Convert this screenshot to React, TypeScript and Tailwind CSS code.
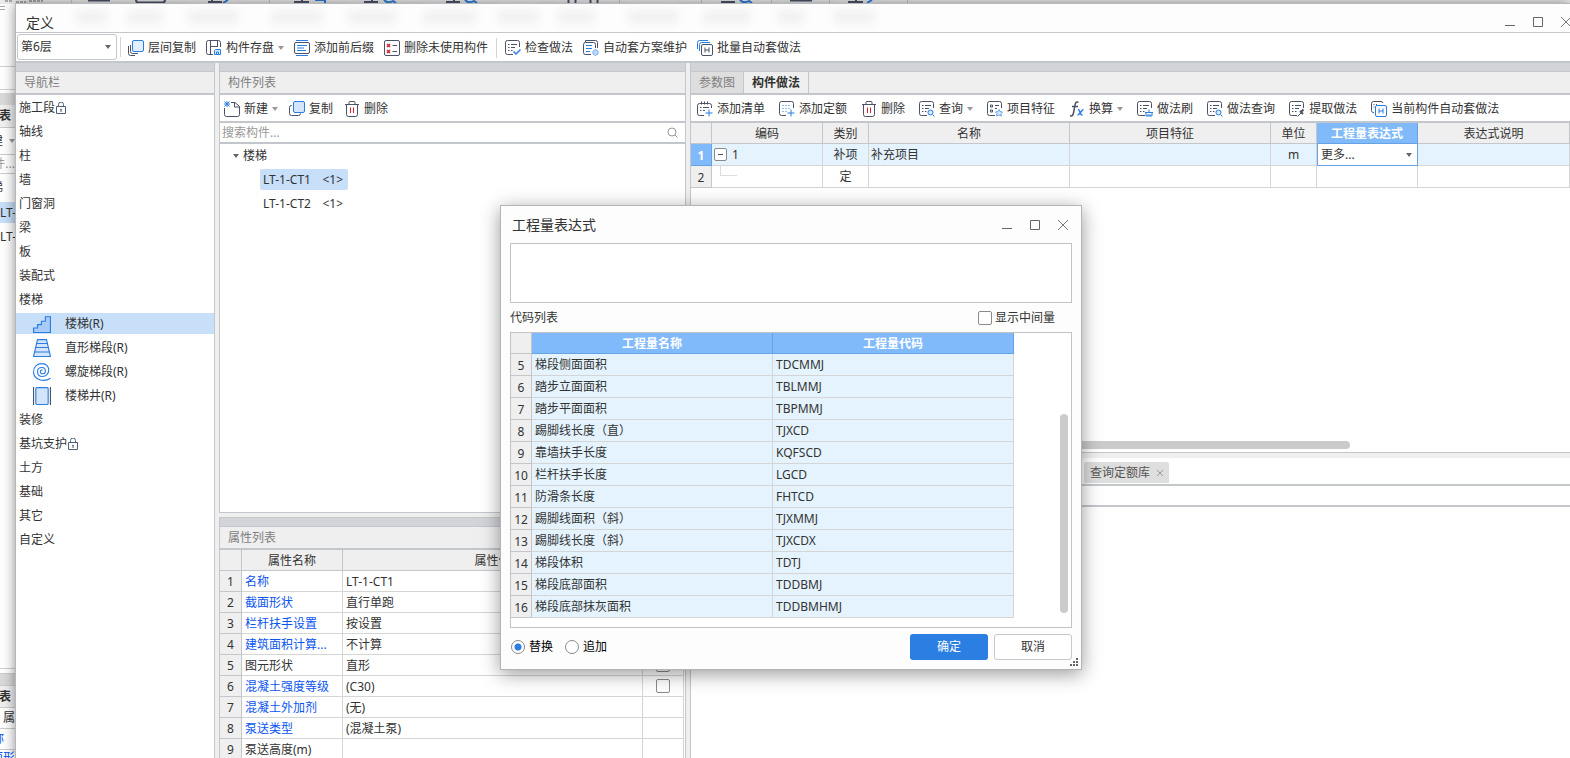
import { useState } from "react";
import type { ReactNode } from "react";

const INK = "#4b5166";
const BLUE = "#2a7de1";

function Svg({ children, size = 16 }: { children: ReactNode; size?: number }) {
  return (
    <svg width={size} height={size} viewBox="0 0 16 16" fill="none" stroke={INK} className="shrink-0" aria-hidden="true">
      {children}
    </svg>
  );
}

/* sheet with the lower right corner left open for a badge */
const Sheet = () => (
  <>
    <path d="M8 14.5H2.5a2 2 0 0 1-2-2v-10a2 2 0 0 1 2-2h10a2 2 0 0 1 2 2V7" />
    <path d="M3 4.5h1.5M6 4.5h6M3 7.5h1.5M6 7.5h4M3 10.5h1.5M6 10.5h1.5" />
  </>
);

const icons: Record<string, ReactNode> = {
  layerCopy: (
    <>
      <path d="M.5 6v7.5a2 2 0 0 0 2 2H7M2.5 5v6.500a2 2 0 0 0 2 2H10" />
      <rect x="4.5" y=".5" width="11" height="11" rx="1.5" fill="#e3efff" stroke={BLUE} />
    </>
  ),
  save: (
    <>
      <path d="M7 14.5H2.5a2 2 0 0 1-2-2v-10a2 2 0 0 1 2-2h10a2 2 0 0 1 2 2V7" />
      <path d="M4.5 1v13M4.5 6.5h7M11.5 1v6" />
      <path d="M9.5 9.5h5v5h-6v-4z" stroke={BLUE} fill="#d7e7fd" />
      <path d="M10.5 14v-2h2v2" stroke={BLUE} />
    </>
  ),
  affix: (
    <>
      <path d="M2 .5h12M2 15.5h12" stroke={BLUE} />
      <rect x=".5" y="2.5" width="15" height="11" rx="1.5" />
      <path d="M3 5.5h10M3 8h7M3 10.5h9" stroke={BLUE} />
    </>
  ),
  unused: (
    <>
      <rect x=".5" y=".5" width="15" height="15" rx="1.5" />
      <path d="m3 4 3 3m0-3L3 7m0 3 3 3m0-3-3 3" stroke="#d81e28" strokeWidth="1.5" />
      <path d="M8.500 5.500H13M8.500 11.500H13" />
    </>
  ),
  check: (
    <>
      <Sheet />
      <path d="m8.500 11.500 2.500 2.500 4.500-4.500" stroke={BLUE} strokeWidth="1.5" />
    </>
  ),
  plan: (
    <>
      <path d="M2.500 2V.5h10a2 2 0 0 1 2 2V8" />
      <path d="M8 14.500H2.500a2 2 0 0 1-2-2v-8a2 2 0 0 1 2-2h8a2 2 0 0 1 2 2V8" />
      <path d="M3 5.500h6M3 8.500h6M3 11.500h4" stroke={BLUE} />
      <path d="m12.500 9.500 2.500 1.500v3l-2.500 1.500L10 14v-3z" stroke="#79b0f5" fill="#bcd8fb" />
    </>
  ),
  batch: (
    <>
      <path d="M.5 9V2.500a2 2 0 0 1 2-2H11M2.500 11V4.500a2 2 0 0 1 2-2H13" stroke={BLUE} />
      <rect x="4.5" y="4.5" width="11" height="11" rx="1.5" />
      <path d="M8 7.500v5M12 7.500v5M8 10h4" />
    </>
  ),
  current: (
    <>
      <path d="M3 11.500a2 2 0 0 1-2.500-2v-7a2 2 0 0 1 2-2H10a2 2 0 0 1 2 1.500" />
      <path d="M2.500 3.500h1M5 3.500h1M2.500 6h1" />
      <rect x="4.5" y="4.5" width="11" height="11" rx="1.5" stroke={BLUE} />
      <path d="M8 7.500v5M12 7.500v5M8 10h4" stroke={BLUE} />
    </>
  ),
  create: (
    <>
      <path d="M7 1.500h4l4.500 4v8a2 2 0 0 1-2 2h-11a2 2 0 0 1-2-2V7M10.500 1.500V6h5" />
      <path d="m.5.5 5 5m0-5-5 5m2.500-5 2.500 2.500M.5 3 3 5.500M.5 3 3 .5m2.500 2.500L3 5.500" stroke={BLUE} />
    </>
  ),
  copy: (
    <>
      <path d="M3 4.500h-.5a2 2 0 0 0-2 2v6a2 2 0 0 0 2 2h7a2 2 0 0 0 2-2" />
      <rect x="4.5" y=".5" width="11" height="11" rx="1.5" fill="#d3e4fb" stroke={BLUE} />
    </>
  ),
  trash: (
    <>
      <path d="M1 3.500h14M5 3V1.500a1 1 0 0 1 1-1h4a1 1 0 0 1 1 1V3M2.500 3.500v10a2 2 0 0 0 2 2h7a2 2 0 0 0 2-2v-10" />
      <path d="M6.500 6.500v5.500M9.500 6.500v5.500" stroke="#d81e28" />
    </>
  ),
  addList: (
    <>
      <path d="M7 14.500H2.500a2 2 0 0 1-2-2v-8a2 2 0 0 1 2-2h10a2 2 0 0 1 2 2V7M4.500.5v3M7.500.5v3M10.500.5v3" />
      <path d="M3 6.500h1.500M6 6.500h6M3 9.500h1.500M6 9.500h2" />
      <path d="M12 8.500v7M8.500 12h7" stroke={BLUE} />
    </>
  ),
  addQuota: (
    <>
      <path d="M7 14.500H2.500a2 2 0 0 1-2-2v-10a2 2 0 0 1 2-2h10a2 2 0 0 1 2 2V7" />
      <path d="M3.500 4.500h8M3.500 7.500h8M3.500 10.500h4" stroke={BLUE} strokeDasharray="1 2" />
      <path d="M12 8.500v7M8.500 12h7" stroke={BLUE} />
    </>
  ),
  query: (
    <>
      <Sheet />
      <circle cx="11.5" cy="11.5" r="2.5" stroke={BLUE} fill="#d7e7fd" />
      <path d="m13.500 13.500 2 2" stroke={BLUE} />
    </>
  ),
  feature: (
    <>
      <path d="M8 14.500H2.500a2 2 0 0 1-2-2v-10a2 2 0 0 1 2-2h10a2 2 0 0 1 2 2V7" />
      <path d="M3.500 4h2v2h-2zM3.500 9h2v2h-2zM8 4.500h4M8 7.500h2" />
      <path d="m12 8.500 1 2 2.500.5-1.500 1.500.5 2.500-2.500-1-2.500 1 .5-2.500L8.500 11l2.500-.5z" stroke="#66a4f2" fill="#dbe9fd" />
    </>
  ),
  brush: (
    <>
      <Sheet />
      <path d="M9 11.500h6v3.500H9zM12 11V8.500M8 11.500h8M11 13v2M13 13v2" stroke={BLUE} />
    </>
  ),
  extract: (
    <>
      <Sheet />
      <path d="m8.500 15.500 4-4" />
      <path d="m11 10 3 3m-1.500-2.500 2-2" strokeWidth="2" />
    </>
  ),
};

function Icon({ name }: { name: string }) {
  if (name === "fx") {
    return (
      <svg width="16" height="16" viewBox="0 0 16 16" fill="none" className="shrink-0" aria-hidden="true">
        <path d="M9.500 1.500C8 .5 6.500 1 6 4L4.500 12c-.5 2.500-1.500 3.500-3.500 2.500M3 5.500h6" stroke={INK} strokeWidth="1.5" />
        <path d="M9 8.500c2-.5 2 6.500 4.500 5.500M14.500 8.500c-2 0-3.500 5.500-6 5.500" stroke={BLUE} strokeWidth="1.5" />
      </svg>
    );
  }
  return <Svg>{icons[name]}</Svg>;
}

function Caret({ dark }: { dark?: boolean }) {
  return (
    <svg width="6" height="4" viewBox="0 0 6 4" className={dark ? "shrink-0 fill-[#666]" : "shrink-0 fill-[#999]"} aria-hidden="true">
      <path d="M0 0h6L3 4z" />
    </svg>
  );
}

function ToolButton({ icon, label, menu }: { icon: string; label: string; menu?: boolean }) {
  return (
    <button type="button" className="flex shrink-0 items-center gap-1 whitespace-nowrap hover:bg-[#e5f3ff]">
      <Icon name={icon} />
      {label}
      {menu && <Caret />}
    </button>
  );
}

function PanelTitle({ children }: { children: ReactNode }) {
  return (
    <>
      <div className="h-[9px] shrink-0 border-b border-[#c3c6cb] bg-[#d3d4da]" />
      <h2 className="flex h-[23px] shrink-0 items-center border-b-2 border-[#c3c6cb] bg-[#efefef] pl-2 text-[#808080]">
        {children}
      </h2>
    </>
  );
}

function WindowButtons({ className }: { className: string }) {
  return (
    <div className={className}>
      <button type="button" aria-label="最小化" className="h-3 w-3">
        <svg width="12" height="12" viewBox="0 0 12 12" stroke="#666"><path d="M1 9.500h10" /></svg>
      </button>
      <button type="button" aria-label="最大化" className="h-3 w-3">
        <svg width="12" height="12" viewBox="0 0 12 12" fill="none" stroke="#666"><path d="M1.500 1.500h9v9h-9z" /></svg>
      </button>
      <button type="button" aria-label="关闭" className="h-3 w-3">
        <svg width="12" height="12" viewBox="0 0 12 12" stroke="#777"><path d="m1 1 10 10M11 1 1 11" /></svg>
      </button>
    </div>
  );
}

const Lock = () => (
  <svg width="10" height="12" viewBox="0 0 10 12" fill="none" stroke="#4f6076" aria-hidden="true">
    <path d="M.5 4.500h9v7h-9zM2.500 4V2.500a2 2 0 0 1 5 0V4M5 8v2" />
    <circle cx="5" cy="7.5" r=".5" />
  </svg>
);

const stairIcons = [
  <path d="M.5 15.500v-4H4v-3h3.500v-3H11v-4h4.500v14z" fill="#a9cbf7" stroke={BLUE} />,
  <path d="M4 .5h8l3.500 15H.5zM3.500 4h9M2.500 7.500h11M1.500 11.500h13" fill="#d3e4fb" stroke={BLUE} />,
  <path
    d="M15.500 13.500C10 17.500.5 15 .5 8 .5 3 4 .5 8 .5s6 3 6 6-2.500 5.500-5.500 5.500-4.500-2-4.500-4.500S5.500 4 8 4s3 1.500 3 3-1 2.500-2.500 2.500S6.500 8.500 6.500 7.500 7.500 6 8.500 6.500"
    stroke={BLUE}
  />,
  <>
    <path d="M.5 0v16M15.500 0v16" />
    <rect x="2.5" y=".5" width="11" height="15" rx="1" fill="#d3e4fb" stroke={BLUE} />
  </>,
];

type NavItem = { name: string; locked?: boolean; children?: string[] };

const nav: NavItem[] = [
  { name: "施工段", locked: true },
  { name: "轴线" },
  { name: "柱" },
  { name: "墙" },
  { name: "门窗洞" },
  { name: "梁" },
  { name: "板" },
  { name: "装配式" },
  { name: "楼梯", children: ["楼梯(R)", "直形梯段(R)", "螺旋梯段(R)", "楼梯井(R)"] },
  { name: "装修" },
  { name: "基坑支护", locked: true },
  { name: "土方" },
  { name: "基础" },
  { name: "其它" },
  { name: "自定义" },
];

const props = [
  { name: "名称", value: "LT-1-CT1", blue: true },
  { name: "截面形状", value: "直行单跑", blue: true },
  { name: "栏杆扶手设置", value: "按设置", blue: true },
  { name: "建筑面积计算...", value: "不计算", blue: true },
  { name: "图元形状", value: "直形", extra: true },
  { name: "混凝土强度等级", value: "(C30)", blue: true, extra: true },
  { name: "混凝土外加剂", value: "(无)", blue: true },
  { name: "泵送类型", value: "(混凝土泵)", blue: true },
  { name: "泵送高度(m)", value: "" },
];

const codes = [
  [5, "梯段侧面面积", "TDCMMJ"],
  [6, "踏步立面面积", "TBLMMJ"],
  [7, "踏步平面面积", "TBPMMJ"],
  [8, "踢脚线长度（直）", "TJXCD"],
  [9, "靠墙扶手长度", "KQFSCD"],
  [10, "栏杆扶手长度", "LGCD"],
  [11, "防滑条长度", "FHTCD"],
  [12, "踢脚线面积（斜）", "TJXMMJ"],
  [13, "踢脚线长度（斜）", "TJXCDX"],
  [14, "梯段体积", "TDTJ"],
  [15, "梯段底部面积", "TDDBMJ"],
  [16, "梯段底部抹灰面积", "TDDBMHMJ"],
];

const box = "h-[14px] w-[14px] shrink-0 appearance-none border border-[#8a8a8a] bg-white checked:bg-[#2a7de1]";
const cell = "border-r border-b border-[#d5d5d5] p-0";
const head = "border-r border-b border-[#c3c6cb] bg-[#efefef] p-0 pt-[2px] font-normal";
const activeHead = "border-r border-b border-[#66a3e6] bg-[#81bafa] p-0 pt-[2px] font-bold text-white";

/* main program showing behind the definition window */
function Backdrop() {
  return (
    <div className="flex h-full flex-col overflow-hidden bg-white" aria-hidden="true">
      <div className="h-1 shrink-0 bg-[#ececec]">
        <svg width="920" height="4" viewBox="0 0 920 4" fill="none">
          <path d="M71.500 0v4M269.500 0v4M619.500 0v4M701.500 0v4M771.500 0v4M829.500 0v4M907.500 0v4" stroke="#c8c8c8" />
          <path d="M5 1h8M16 2h10M29 1h14" stroke="#a8a8a8" strokeWidth="2" strokeDasharray="3 1" />
          <path d="M88 .5h22M790 .5h22M136 0q0 2.500 3 2.500h23q3 0 3-2.500" stroke={INK} strokeWidth="2" />
          <path d="M208 2h14M294 2h15M364 2h14M446 2h14M721 2h14M848 2h15M212 0v2M302 0v2M372 0v2M454 0v2M856 0v2" stroke={INK} strokeWidth="2" />
          <path d="M568.500 0v3M575.500 0v3M590.500 0v3M597.500 0v3" stroke={INK} strokeWidth="2" />
          <path d="m223 3 5-3M315 0h10v3M384 0q4 4 9 1l3 2M465 0q4 4 9 1l3 2M740 0q4 4 9 1l3 2M867 3l5-3" stroke={BLUE} strokeWidth="2" />
        </svg>
      </div>
      <div className="flex w-[15px] flex-1 flex-col overflow-hidden whitespace-nowrap">
        <div className="h-[63px] shrink-0 border-b border-[#d0d0d0] pt-[2px]">
          <svg width="6" height="8" viewBox="0 0 6 8" stroke="#aaa"><path d="M0 .5h5M0 3.500h5" /></svg>
        </div>
        <div className="h-[23px] shrink-0 border-b border-[#d0d0d0]" />
        <div className="mt-[3px] h-[12px] shrink-0 bg-[#d9d9d9]" />
        <div className="flex h-[23px] shrink-0 items-center justify-end border-b border-[#ccc] bg-[#efefef] pr-1 font-bold">表</div>
        <div className="flex h-[27px] shrink-0 items-center justify-end gap-[6px] border-b border-[#ccc]">建<Caret /></div>
        <div className="flex h-[19px] shrink-0 items-center justify-end border-b border-[#ccc] text-[#999]">件...</div>
        <div className="flex h-[28px] shrink-0 items-center justify-end pr-3">梯</div>
        <div className="flex h-[21px] shrink-0 items-center bg-[#c7dff8]">LT-</div>
        <div className="flex h-[27px] shrink-0 items-center">LT-</div>
        <div className="flex-1 border-b border-[#d0d0d0]" />
        <div className="mt-[4px] h-[13px] shrink-0 border-y border-[#ccc] bg-[#d9d9d9]" />
        <div className="flex h-[22px] shrink-0 items-center justify-end border-b border-[#ccc] bg-[#efefef] pr-1 font-bold">表</div>
        <div className="flex h-[21px] shrink-0 items-center border-b border-[#ccc] pl-[3px]">属</div>
        <div className="flex h-[21px] shrink-0 items-center justify-end border-b border-[#ccc] pr-[11px] text-[#0a55f0]">称</div>
        <div className="flex h-[8px] shrink-0 justify-end text-[#0a55f0]">面形</div>
      </div>
    </div>
  );
}

function NavPanel() {
  const [active, setActive] = useState("楼梯(R)");
  return (
    <aside className="flex w-[199px] shrink-0 flex-col border-r border-[#c3c6cb] bg-white">
      <PanelTitle>导航栏</PanelTitle>
      <ul className="pt-px">
        {nav.map((item) => (
          <li key={item.name}>
            <button type="button" className="flex h-6 w-full items-center gap-px pl-[3px]">
              {item.name}
              {item.locked && <Lock />}
            </button>
            {item.children && (
              <ul>
                {item.children.map((child, i) => (
                  <li key={child} className="h-6 pt-px">
                    <button
                      type="button"
                      onClick={() => setActive(child)}
                      className={`flex h-[21px] w-full items-center gap-[14px] pl-[17px] ${active === child ? "bg-[#c8dff9]" : ""}`}
                    >
                      <Svg size={18}>{stairIcons[i]}</Svg>
                      {child}
                    </button>
                  </li>
                ))}
              </ul>
            )}
          </li>
        ))}
      </ul>
    </aside>
  );
}

function ComponentPanel() {
  return (
    <div className="flex w-[467px] shrink-0 flex-col gap-1">
      <section className="flex min-h-0 flex-1 flex-col border-x border-b border-[#c3c6cb] bg-white">
        <PanelTitle>构件列表</PanelTitle>
        <div className="flex h-7 shrink-0 items-center gap-[11px] border-b-2 border-[#c3c6cb] pt-[2px] pl-1">
          <ToolButton icon="create" label="新建" menu />
          <ToolButton icon="copy" label="复制" />
          <ToolButton icon="trash" label="删除" />
        </div>
        <div className="flex h-[21px] shrink-0 items-center border-b-2 border-[#c3c6cb] pr-[7px] pl-[2px]">
          <input aria-label="搜索构件" placeholder="搜索构件..." className="min-w-0 flex-1 outline-none placeholder:text-[#999]" />
          <svg width="11" height="11" viewBox="0 0 11 11" fill="none" stroke="#999" aria-hidden="true">
            <circle cx="5" cy="5" r="4" />
            <path d="m8 8 2.500 2.500" />
          </svg>
        </div>
        <div className="flex h-6 items-center gap-1 pl-[13px]"><Caret dark />楼梯</div>
        <button type="button" className="mt-px ml-10 flex h-[21px] w-[88px] items-center justify-between self-start rounded-[2px] bg-[#c8dff9] pr-[5px] pl-[3px]">
          <span>LT-1-CT1</span>
          <span>&lt;1&gt;</span>
        </button>
        <button type="button" className="mt-[3px] ml-10 flex h-[21px] w-[88px] items-center justify-between self-start pr-[5px] pl-[3px]">
          <span>LT-1-CT2</span>
          <span>&lt;1&gt;</span>
        </button>
      </section>
      <section className="h-[241px] shrink-0 overflow-hidden border-x border-t border-[#c3c6cb] bg-white">
        <PanelTitle>属性列表</PanelTitle>
        <table className="w-[464px] table-fixed border-separate border-spacing-0">
          <colgroup>
            <col className="w-[22px]" />
            <col className="w-[101px]" />
            <col />
            <col className="w-[41px]" />
          </colgroup>
          <thead>
            <tr className="h-[21px]">
              <th className={head} />
              <th className={head}>属性名称</th>
              <th className={head}>属性值</th>
              <th className={head}>附加</th>
            </tr>
          </thead>
          <tbody>
            {props.map((p, i) => (
              <tr key={p.name} className="h-[21px]">
                <th className={head}>{i + 1}</th>
                <td className={`border-r border-b border-[#d5d5d5] p-0 pt-[2px] pl-[3px] whitespace-nowrap ${p.blue ? "text-[#0a55f0]" : ""}`}>{p.name}</td>
                <td className="border-r border-b border-[#d5d5d5] p-0 pt-[2px] pl-[3px]">{p.value}</td>
                <td className={cell}>
                  {p.extra && <input type="checkbox" aria-label={p.name} className={`${box} mx-auto block rounded-[2px]`} />}
                </td>
              </tr>
            ))}
          </tbody>
        </table>
      </section>
    </div>
  );
}

function MethodPanel() {
  return (
    <div className="flex min-w-0 flex-1 flex-col border-l border-[#c3c6cb] bg-white">
      <div className="h-[9px] shrink-0 border-b border-[#c3c6cb] bg-[#d3d4da]" />
      <div className="flex h-[23px] shrink-0 border-b-2 border-[#c3c6cb] bg-[#efefef]">
        <button type="button" className="border-r border-[#c3c6cb] bg-[#dedede] px-2 text-[#808080]">参数图</button>
        <button type="button" className="border-r border-[#c3c6cb] px-2 font-bold">构件做法</button>
      </div>
      <div className="flex h-7 shrink-0 items-center gap-[14px] border-b-2 border-[#c3c6cb] pt-[2px] pl-[6px]">
        <ToolButton icon="addList" label="添加清单" />
        <ToolButton icon="addQuota" label="添加定额" />
        <ToolButton icon="trash" label="删除" />
        <ToolButton icon="query" label="查询" menu />
        <ToolButton icon="feature" label="项目特征" />
        <ToolButton icon="fx" label="换算" menu />
        <ToolButton icon="brush" label="做法刷" />
        <ToolButton icon="query" label="做法查询" />
        <ToolButton icon="extract" label="提取做法" />
        <ToolButton icon="current" label="当前构件自动套做法" />
      </div>
      <table className="w-full shrink-0 table-fixed border-separate border-spacing-0">
        <colgroup>
          <col className="w-[21px]" />
          <col className="w-[111px]" />
          <col className="w-[46px]" />
          <col className="w-[201px]" />
          <col className="w-[201px]" />
          <col className="w-[46px]" />
          <col className="w-[101px]" />
          <col />
        </colgroup>
        <thead>
          <tr className="h-[21px]">
            <th className={head} />
            <th className={head}>编码</th>
            <th className={head}>类别</th>
            <th className={head}>名称</th>
            <th className={head}>项目特征</th>
            <th className={head}>单位</th>
            <th className={activeHead}>工程量表达式</th>
            <th className={head}>表达式说明</th>
          </tr>
        </thead>
        <tbody>
          <tr className="h-[22px] bg-[#e5f3fe]">
            <th className={activeHead}>1</th>
            <td className={cell}>
              <div className="flex items-center gap-[5px] pl-[2px]">
                <button type="button" aria-label="折叠" className="flex h-[13px] w-[13px] items-center justify-center rounded-[2px] border border-[#8a8a8a] bg-white">
                  <i className="h-px w-[5px] bg-[#555]" />
                </button>
                1
              </div>
            </td>
            <td className={`${cell} text-center`}>补项</td>
            <td className={`${cell} pl-[2px]`}>补充项目</td>
            <td className={cell} />
            <td className={`${cell} text-center`}>m</td>
            <td className="border-x border-b border-[#66a3e6] bg-white p-0">
              <div className="flex items-center pr-[5px] pl-[3px]">
                <select aria-label="工程量表达式" className="min-w-0 flex-1 appearance-none bg-transparent outline-none">
                  <option>更多...</option>
                </select>
                <Caret dark />
              </div>
            </td>
            <td className={cell} />
          </tr>
          <tr className="h-[22px]">
            <th className={head}>2</th>
            <td className={cell}>
              <i className="mb-[11px] ml-2 block h-[10px] w-[17px] border-b border-l border-[#ddd]" />
            </td>
            <td className={`${cell} text-center`}>定</td>
            <td className={cell} />
            <td className={cell} />
            <td className={cell} />
            <td className={cell} />
            <td className={cell} />
          </tr>
        </tbody>
      </table>
      <div className="flex min-h-0 flex-1 items-end pb-[3px]">
        <div className="h-2 w-3/4 rounded-full bg-[#cbcbcb]" />
      </div>
      <div className="h-[6px] shrink-0 border-t border-[#c3c6cb] bg-[#efefef]" />
      <div className="h-[300px] shrink-0">
        <div className="flex h-7 items-end border-b-2 border-[#c3c6cb] pb-px pl-[393px]">
          <button type="button" className="flex h-[21px] items-center gap-[7px] rounded-t-[2px] bg-[#dedede] px-[6px] text-[#555]">
            查询定额库
            <svg width="6" height="6" viewBox="0 0 6 6" stroke="#999" aria-hidden="true"><path d="m0 0 6 6M6 0 0 6" /></svg>
          </button>
        </div>
        <div className="h-[21px] border-b-2 border-[#c3c6cb]" />
      </div>
    </div>
  );
}

function ExpressionDialog() {
  const [mode, setMode] = useState("替换");
  return (
    <div
      role="dialog"
      aria-label="工程量表达式"
      className="absolute top-[205px] left-[500px] w-[582px] border border-[#b4b4b4] bg-[#fdfdfd] px-[9px] pb-[9px] shadow-[0_4px_18px_rgba(0,0,0,0.4)]"
    >
      <div className="flex h-[37px] items-center justify-between pl-[2px]">
        <h1 className="text-[14px]">工程量表达式</h1>
        <WindowButtons className="flex gap-4 pr-[3px]" />
      </div>
      <textarea aria-label="表达式" className="block h-[60px] w-full resize-none border border-[#c3c3c3] bg-white outline-none" />
      <div className="flex h-[29px] items-center justify-between pr-[17px]">
        <span>代码列表</span>
        <label className="flex items-center gap-[3px]">
          <input type="checkbox" className={`${box} rounded-[2px]`} />
          显示中间量
        </label>
      </div>
      <div className="flex h-[296px] justify-between border border-[#c3c3c3] bg-white pr-[3px]">
        <table className="w-[503px] table-fixed self-start border-separate border-spacing-0">
          <colgroup>
            <col className="w-[21px]" />
            <col />
            <col />
          </colgroup>
          <thead>
            <tr className="h-[21px]">
              <th className={head} />
              <th className={activeHead}>工程量名称</th>
              <th className={activeHead}>工程量代码</th>
            </tr>
          </thead>
          <tbody>
            {codes.map(([n, name, code]) => (
              <tr key={n} className="h-[22px] bg-[#e5f3fe]">
                <th className={head}>{n}</th>
                <td className={`${cell} pl-[3px]`}>{name}</td>
                <td className={`${cell} pl-[3px]`}>{code}</td>
              </tr>
            ))}
          </tbody>
        </table>
        <div className="mt-[81px] h-[199px] w-2 rounded-full bg-[#cbcbcb]" />
      </div>
      <div className="flex items-center gap-[6px] pt-[6px] pl-px">
        {["替换", "追加"].map((m) => (
          <label key={m} className="mr-[6px] flex items-center gap-1 text-black">
            <input
              type="radio"
              name="mode"
              checked={mode === m}
              onChange={() => setMode(m)}
              className="h-[14px] w-[14px] appearance-none rounded-full border border-[#8a8a8a] bg-white checked:bg-[radial-gradient(circle,#2a7de1_3px,white_4px)]"
            />
            {m}
          </label>
        ))}
        <button type="button" className="ml-auto h-[26px] w-[78px] rounded-[3px] bg-[#2b7ee2] text-white">确定</button>
        <button type="button" className="h-[26px] w-[78px] rounded-[3px] border border-[#c8c8c8] bg-white">取消</button>
      </div>
      <svg width="8" height="8" viewBox="0 0 8 8" fill="#666" className="absolute right-[3px] bottom-[3px]" aria-hidden="true">
        <path d="M6 0h2v2H6zM3 3h2v2H3zM6 3h2v2H6zM0 6h2v2H0zM3 6h2v2H3zM6 6h2v2H6z" />
      </svg>
    </div>
  );
}

export default function App() {
  return (
    <div className="relative h-screen overflow-hidden font-['Noto_Sans','Noto_Sans_CJK_SC',sans-serif] text-[12px] leading-4 text-[#333]">
      <Backdrop />

      <main className="absolute top-[3px] right-0 bottom-0 left-[15px] flex flex-col border-t border-l border-[#b4b7bc] bg-[#efefef] shadow-[0_0_12px_rgba(0,0,0,0.45)]">
        <header className="flex h-[29px] shrink-0 items-center justify-between border-b border-[#c3c6cb] bg-[#fdfdfd] pl-[10px]">
          <h1 className="pt-[9px] text-[14px]">定义</h1>
          {/* toolbar labels glowing through the translucent title bar */}
          <svg width="820" height="26" viewBox="0 0 820 26" className="mr-auto ml-3 blur-[4px]" aria-hidden="true">
            <path
              d="M10 12h30M62 12h34M122 12h50M206 12h50M282 12h48M358 12h52M432 12h40M492 12h36M562 12h50M638 12h46M712 12h26M768 12h40"
              stroke="#f1f1f1"
              strokeWidth="14"
            />
          </svg>
          <WindowButtons className="-mr-[2px] flex gap-4 pt-2" />
        </header>

        <div className="flex h-[30px] shrink-0 items-center border-b-2 border-[#c3c6cb] bg-white pl-px">
          <div className="flex h-[26px] w-[100px] items-center rounded-[3px] border border-[#c3c6cb] pr-[5px] pl-[3px]">
            <select aria-label="楼层" className="min-w-0 flex-1 appearance-none outline-none">
              <option>第6层</option>
            </select>
            <Caret dark />
          </div>
          <i className="mr-[7px] ml-[3px] h-5 w-px bg-[#d5d5d5]" />
          <div className="flex items-center gap-[10px] pt-[2px]">
            <ToolButton icon="layerCopy" label="层间复制" />
            <ToolButton icon="save" label="构件存盘" menu />
            <ToolButton icon="affix" label="添加前后缀" />
            <ToolButton icon="unused" label="删除未使用构件" />
            <i className="-mx-[2px] h-5 w-px bg-[#d5d5d5]" />
            <ToolButton icon="check" label="检查做法" />
            <ToolButton icon="plan" label="自动套方案维护" />
            <ToolButton icon="batch" label="批量自动套做法" />
          </div>
        </div>

        <div className="flex min-h-0 flex-1 gap-1">
          <NavPanel />
          <ComponentPanel />
          <MethodPanel />
        </div>
      </main>

      <ExpressionDialog />
    </div>
  );
}
